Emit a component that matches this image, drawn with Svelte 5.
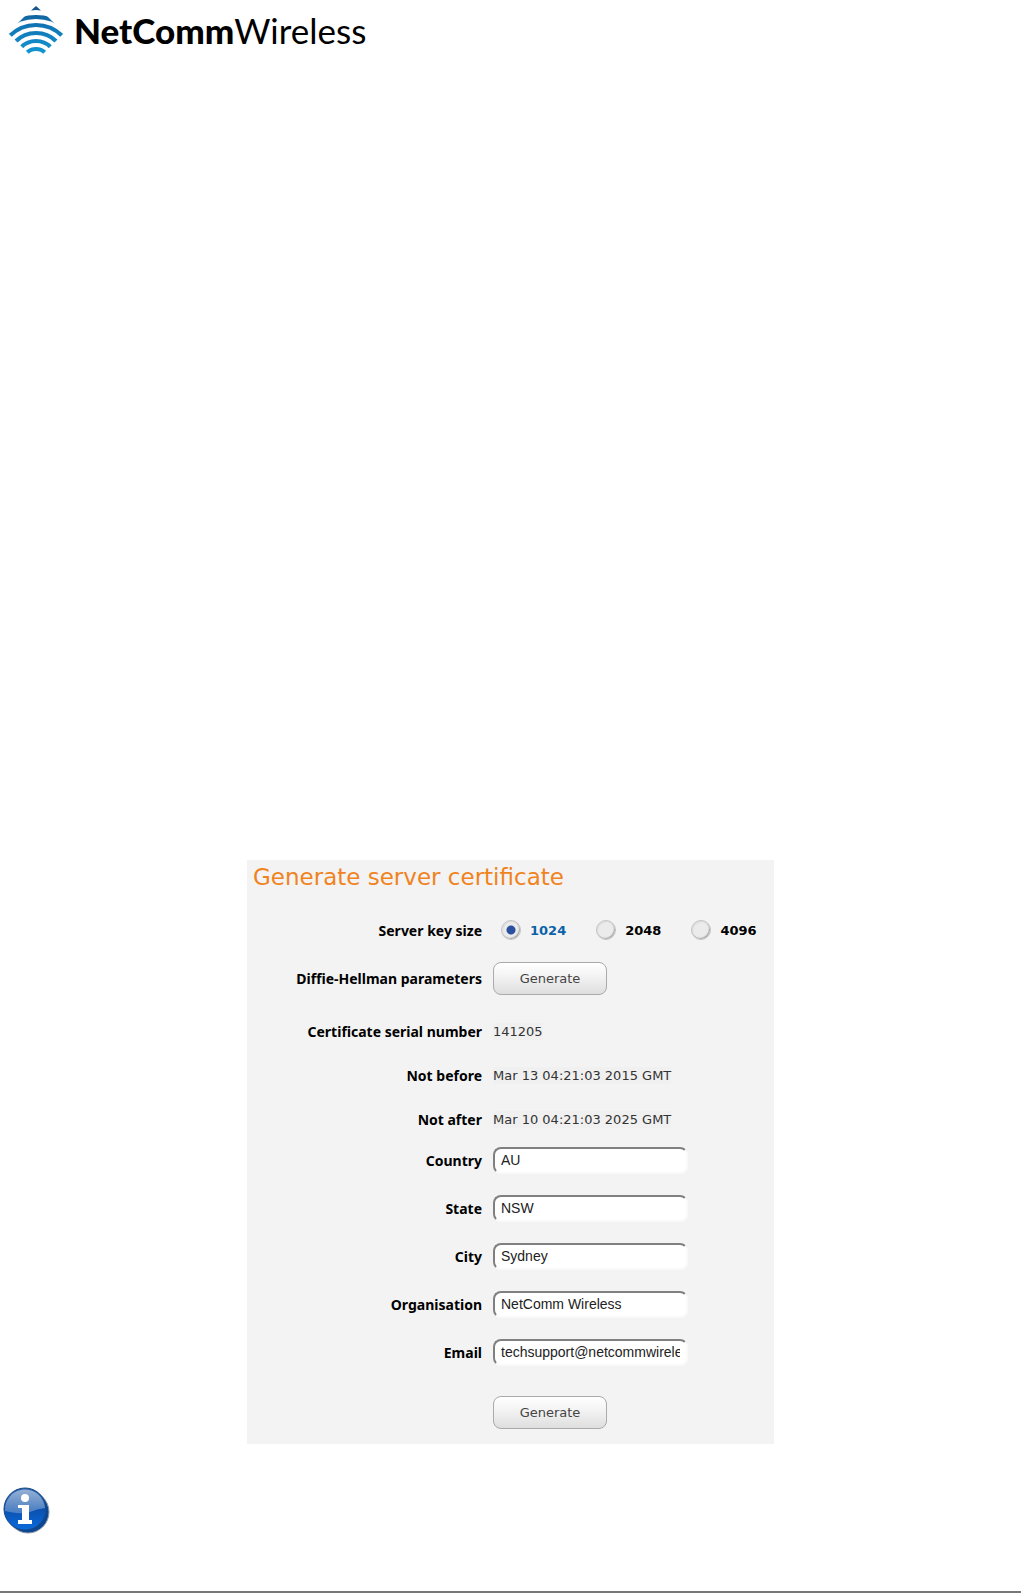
<script lang="ts">
	const keySizes = ['1024', '2048', '4096'];
	let keySize = $state('1024');

	const details = [
		{ label: 'Certificate serial number', value: '141205' },
		{ label: 'Not before', value: 'Mar 13 04:21:03 2015 GMT' },
		{ label: 'Not after', value: 'Mar 10 04:21:03 2025 GMT' }
	];

	let fields = $state([
		{ id: 'country', label: 'Country', value: 'AU' },
		{ id: 'state', label: 'State', value: 'NSW' },
		{ id: 'city', label: 'City', value: 'Sydney' },
		{ id: 'organisation', label: 'Organisation', value: 'NetComm Wireless' },
		{ id: 'email', label: 'Email', value: 'techsupport@netcommwireless.com' }
	]);

	// radii of the logo waves, outermost first
	const waves = [45, 37, 29, 21, 13];
</script>

<div class="page">
	<header>
		<svg class="mark" viewBox="8 5 56 50" width="56" height="50" aria-hidden="true">
			<defs>
				<clipPath id="diamond">
					<path d="M36 5 64 33 36 61 8 33Z" />
				</clipPath>
				<linearGradient id="wave" gradientUnits="userSpaceOnUse" x1="0" y1="6" x2="0" y2="54">
					<stop offset="0" stop-color="#17568f" />
					<stop offset="0.4" stop-color="#0f74b3" />
					<stop offset="1" stop-color="#1598d3" />
				</linearGradient>
			</defs>
			<path d="M36 6 41 10.500Q36 9.500 31 10.500Z" fill="#17568f" />
			<g clip-path="url(#diamond)" fill="none" stroke="url(#wave)" stroke-width="4.200">
				{#each waves as r}
					<path d="M{36 - r} 62A{r} {r} 0 0 1 {36 + r} 62" />
				{/each}
			</g>
		</svg>
		<span class="brand"><b>NetComm</b>Wireless</span>
	</header>

	<main>
		<form class="panel" onsubmit={(e) => e.preventDefault()}>
			<h1>Generate server certificate</h1>

			<div class="row key-size" role="radiogroup" aria-labelledby="key-size">
				<span class="label" id="key-size">Server key size</span>
				<div class="radios">
					{#each keySizes as size}
						<label class:selected={keySize === size}>
							<input type="radio" name="keysize" value={size} bind:group={keySize} />
							{size}
						</label>
					{/each}
				</div>
			</div>

			<div class="row dh">
				<span class="label">Diffie-Hellman parameters</span>
				<button type="button">Generate</button>
			</div>

			{#each details as { label, value }}
				<div class="row detail">
					<span class="label">{label}</span>
					<span class="value">{value}</span>
				</div>
			{/each}

			{#each fields as field}
				<div class="row field">
					<label class="label" for={field.id}>{field.label}</label>
					<input type="text" id={field.id} bind:value={field.value} />
				</div>
			{/each}

			<div class="row submit">
				<button type="submit">Generate</button>
			</div>
		</form>
	</main>

	<footer>
		<svg viewBox="0 0 48 48" width="48" height="48" role="img" aria-label="Information">
			<defs>
				<linearGradient id="ball" x1="0" y1="0" x2="0" y2="1">
					<stop offset="0" stop-color="#2a62ab" />
					<stop offset="0.5" stop-color="#0b50ac" />
					<stop offset="1" stop-color="#0a6ade" />
				</linearGradient>
				<linearGradient id="gloss" x1="0" y1="0" x2="0" y2="1">
					<stop offset="0" stop-color="#fff" stop-opacity="0.5" />
					<stop offset="1" stop-color="#fff" stop-opacity="0.25" />
				</linearGradient>
			</defs>
			<circle cx="25" cy="25" r="21" fill="#0d4692" stroke="#8f9cab" />
			<circle cx="22" cy="22" r="21" fill="url(#ball)" stroke="#174886" />
			<path d="M2 24A20 20 0 0 1 42 21Q34 22 27 25T2 24Z" fill="url(#gloss)" />
			<circle cx="22" cy="11" r="4" fill="#fff" />
			<path d="M15 18h11v15h3v4H15v-4h4V21h-4z" fill="#fff" />
		</svg>
	</footer>
</div>

<style>
	:global(body) {
		margin: 0;
		background: #fff;
	}

	.page {
		display: flex;
		flex-direction: column;
		min-height: 100vh;
		box-sizing: border-box;
		border-bottom: 2px solid #777;
	}

	header {
		display: flex;
		align-items: center;
		gap: 10px;
		padding: 5px 8px;
	}

	.brand {
		font: 35px/50px Lato, 'Liberation Sans', sans-serif;
		color: #000;
	}

	.brand b {
		font-weight: 900;
	}

	main {
		display: flex;
		justify-content: center;
		padding-top: 800px;
	}

	.panel {
		width: 527px;
		max-width: 100%;
		box-sizing: border-box;
		padding: 0 6px 15px;
		background: #f3f3f3;
		font: 13px/17px 'DejaVu Sans', Verdana, sans-serif;
		color: #333;
	}

	h1 {
		margin: 0 0 18px;
		font-size: 23px;
		line-height: 34px;
		font-weight: 400;
		color: #f0831e;
	}

	.row {
		display: grid;
		grid-template-columns: 229px 1fr;
		column-gap: 11px;
		align-items: center;
	}

	.label {
		font-family: 'Noto Sans', 'DejaVu Sans', sans-serif;
		font-size: 14px;
		font-weight: 700;
		text-align: right;
		color: #000;
	}

	.key-size {
		height: 36px;
	}

	.radios {
		display: flex;
		gap: 30px;
		padding-left: 8px;
	}

	.radios label {
		display: flex;
		align-items: center;
		gap: 9px;
		font-weight: 700;
		color: #000;
	}

	.radios .selected {
		color: #0b62a8;
	}

	.radios input {
		appearance: none;
		width: 20px;
		height: 20px;
		margin: 0;
		border: 1px solid #c4c4c4;
		border-radius: 50%;
		background: #ebebeb;
		box-shadow: inset -1px -1px 1px #aaa, inset 1px 1px 1px #ddd;
	}

	.radios input:checked {
		background: radial-gradient(circle, #2b50a0 4px, #ebebeb 5px);
	}

	.dh {
		height: 60px;
		margin-bottom: 1px;
	}

	button {
		justify-self: start;
		width: 114px;
		height: 33px;
		padding: 0;
		border: 1px solid #aaa;
		border-radius: 8px;
		background: linear-gradient(#fff, #f4f4f4 40%, #dedede);
		font: inherit;
		color: #444;
	}

	.detail {
		height: 44px;
	}

	.value {
		justify-self: start;
		background: #f0f0f0;
	}

	.field {
		height: 38px;
		margin-bottom: 10px;
	}

	.field input {
		width: 195px;
		height: 27px;
		box-sizing: border-box;
		padding: 0 6px;
		border: 2px solid;
		border-color: #808080 #fafafa #fafafa #808080;
		border-radius: 8px;
		background: #fff;
		font: 14px 'Liberation Sans', Arial, sans-serif;
		color: #222;
	}

	.submit {
		padding-top: 15px;
	}

	.submit button {
		grid-column: 2;
	}

	footer {
		margin-top: auto;
		padding: 0 3px 56px;
	}

	footer svg {
		display: block;
	}
</style>
